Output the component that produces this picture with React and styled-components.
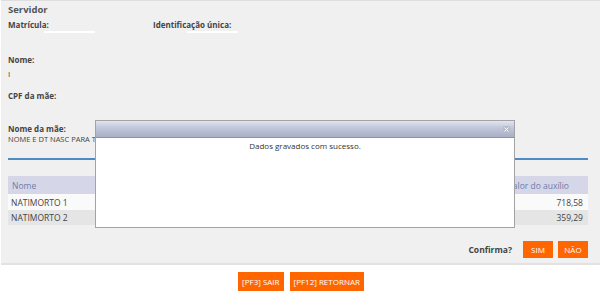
import styled, { createGlobalStyle } from "styled-components"

const GlobalStyle = createGlobalStyle`
    html, body {
        margin: 0;
        padding: 0;
        background: #ffffff;
    }
    body {
        font-family: "Open Sans", "Liberation Sans", sans-serif;
        color: #444;
    }
`;

const Page = styled.div`
    position: relative;
    width: 601px;
    height: 296px;
    overflow: hidden;
`;

const Panel = styled.div`
    margin-left: 1px;
    width: 599px;
    height: 265px;
    box-sizing: border-box;
    background: #f0f0f0;
    border-top: 1px solid #dedede;
    border-bottom: 2px solid #e2e2e2;
    padding: 3px 12px 0 7px;
    display: flex;
    flex-direction: column;
`;

const Title = styled.div`
    font-size: 9.5px;
    font-weight: 700;
    line-height: 12px;
    color: #555;
`;

const FieldRow = styled.div`
    display: flex;
    margin-top: ${props => props.top || 0}px;
`;

const Field = styled.div`
    width: ${props => props.width ? props.width + "px" : "auto"};
    display: flex;
    flex-direction: column;
`;

const Label = styled.div`
    font-size: 8px;
    font-weight: 700;
    line-height: ${props => props.lh || 11}px;
    color: #444;
    margin-top: ${props => props.top || 0}px;
    white-space: nowrap;
`;

const BlankValue = styled.div`
    margin: 1px 0 0 ${props => props.indent}px;
    width: 51px;
    height: 2px;
    background: #ffffff;
`;

const Value = styled.div`
    font-size: ${props => props.size || 8}px;
    line-height: ${props => props.lh || 11}px;
    color: #444;
    margin-top: ${props => props.top || 0}px;
    white-space: nowrap;
`;

const Divider = styled.div`
    margin-top: 14px;
    height: 2px;
    background: #4d8cc2;
`;

const Table = styled.div`
    margin-top: 16px;
    display: flex;
    flex-direction: column;
`;

const HeadRow = styled.div`
    display: flex;
    justify-content: space-between;
    align-items: center;
    height: 18px;
    padding: 0 19px 0 4px;
    background: #d5d7e8;
    color: #6f7cab;
    font-size: 8.5px;
`;

const Row = styled.div`
    display: flex;
    justify-content: space-between;
    align-items: center;
    height: ${props => props.h}px;
    padding: 0 5px 0 3px;
    background: ${props => props.alt ? "#e5e5e5" : "#fafafa"};
    font-size: 8.5px;
    color: #444;
`;

const ConfirmBar = styled.div`
    margin-top: 16px;
    display: flex;
    justify-content: flex-end;
    align-items: center;
    gap: 5px;
`;

const ConfirmText = styled.span`
    font-size: 8.5px;
    font-weight: 700;
    color: #444;
    margin-right: 6px;
`;

const OrangeButton = styled.button`
    height: ${props => props.h || 17}px;
    min-width: ${props => props.w || 30}px;
    padding: 0 4px;
    border: none;
    background: #ff6600;
    color: #ffffff;
    font-family: "Open Sans", "Liberation Sans", sans-serif;
    font-size: 8px;
    line-height: 1;
    cursor: pointer;
`;

const Footer = styled.div`
    margin-top: 7px;
    display: flex;
    justify-content: center;
    gap: 6px;
    padding-left: 1px;
`;

const Dialog = styled.div`
    position: absolute;
    left: 95px;
    top: 120px;
    width: 420px;
    height: 108px;
    box-sizing: border-box;
    background: #ffffff;
    border: 1px solid #a3a3a3;
    display: flex;
    flex-direction: column;
`;

const DialogHead = styled.div`
    height: 16px;
    border-bottom: 1px solid #8e94a8;
    background: linear-gradient(#e2e5ef 0%, #c0c6d9 45%, #a8afc6 100%);
    display: flex;
    justify-content: flex-end;
    align-items: center;
    padding-right: 4px;
`;

const CloseBox = styled.span`
    width: 7px;
    height: 7px;
    display: flex;
    align-items: center;
    justify-content: center;
    background: #b9bcc6;
    border-radius: 1px;
`;

const DialogBody = styled.div`
    padding-top: 2px;
    text-align: center;
    font-size: 8px;
    line-height: 12px;
    color: #333;
`;

const App = () => {
    return (
        <Page>
            <GlobalStyle />
            <Panel>
                <Title>Servidor</Title>
                <FieldRow top={3}>
                    <Field width={145}>
                        <Label>Matrícula:</Label>
                        <BlankValue indent={36} />
                    </Field>
                    <Field>
                        <Label>Identificação única:</Label>
                        <BlankValue indent={34} />
                    </Field>
                </FieldRow>
                <Label top={21}>Nome:</Label>
                <Value top={3}>I</Value>
                <Label top={11}>CPF da mãe:</Label>
                <Label top={23} lh={10}>Nome da mãe:</Label>
                <Value size={7.5} lh={10}>NOME E DT NASC PARA TESTE</Value>
                <Divider />
                <Table>
                    <HeadRow>
                        <span>Nome</span>
                        <span>Valor do auxílio</span>
                    </HeadRow>
                    <Row h={16}>
                        <span>NATIMORTO 1</span>
                        <span>718,58</span>
                    </Row>
                    <Row h={15} alt>
                        <span>NATIMORTO 2</span>
                        <span>359,29</span>
                    </Row>
                </Table>
                <ConfirmBar>
                    <ConfirmText>Confirma?</ConfirmText>
                    <OrangeButton>SIM</OrangeButton>
                    <OrangeButton>NÃO</OrangeButton>
                </ConfirmBar>
            </Panel>
            <Footer>
                <OrangeButton h={19} w={43}>[PF3] SAIR</OrangeButton>
                <OrangeButton h={19} w={72}>[PF12] RETORNAR</OrangeButton>
            </Footer>
            <Dialog>
                <DialogHead>
                    <CloseBox>
                        <svg width="5" height="5" viewBox="0 0 5 5">
                            <path d="M0.5 0.5 L4.5 4.5 M4.5 0.5 L0.5 4.5" stroke="#ffffff" strokeWidth="1" />
                        </svg>
                    </CloseBox>
                </DialogHead>
                <DialogBody>Dados gravados com sucesso.</DialogBody>
            </Dialog>
        </Page>
    )
}

export default App;
